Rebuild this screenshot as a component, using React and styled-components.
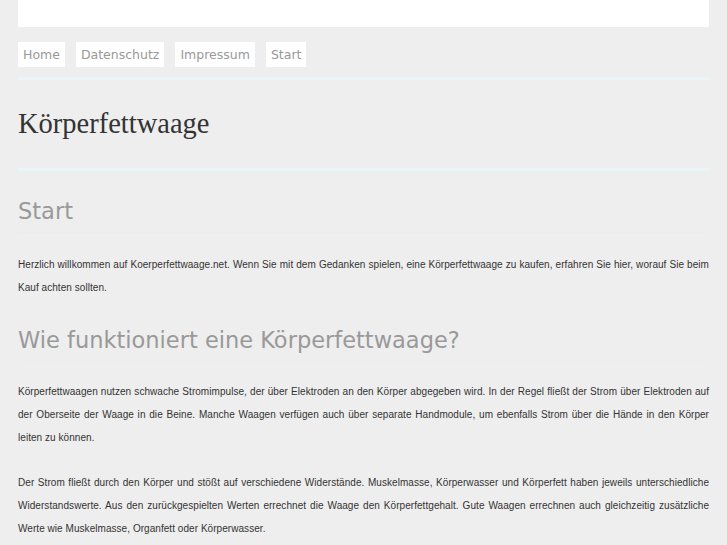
import React from 'react';
import styled, { createGlobalStyle } from 'styled-components';

const GlobalStyle = createGlobalStyle`
  body {
    margin: 0;
    background: #eeeeee;
    font-family: "Liberation Sans", Arial, sans-serif;
  }
`;

const Page = styled.div`
  margin: 0 18px;
`;

const Header = styled.header`
  height: 27px;
  background: #ffffff;
`;

const Nav = styled.nav`
  display: flex;
  gap: 11px;
  margin-top: 15px;
  padding-bottom: 10px;
  border-bottom: 3px solid #e9f4f6;
`;

const NavItem = styled.a`
  display: block;
  height: 25px;
  line-height: 25px;
  padding: 0 5px;
  background: #ffffff;
  color: #999999;
  font-family: "DejaVu Sans", sans-serif;
  font-size: 12.5px;
  text-decoration: none;
`;

const TitleBar = styled.div`
  height: 88px;
  display: flex;
  align-items: center;
  border-bottom: 3px solid #e9f4f6;
`;

const Title = styled.h1`
  margin: 0;
  font-family: "Liberation Serif", "Times New Roman", serif;
  font-weight: normal;
  font-size: 28.5px;
  color: #333333;
`;

const Heading = styled.h2`
  margin: ${p => p.$top}px 0 0;
  padding-bottom: 6px;
  border-bottom: 1px solid #e6eef0;
  font-family: "DejaVu Sans", sans-serif;
  font-weight: normal;
  font-size: 22.5px;
  line-height: 30px;
  color: #999999;
`;

const Para = styled.p`
  margin: ${p => p.$top}px 0 0;
  font-size: 10px;
  line-height: 23px;
  letter-spacing: 0.05px;
  text-align: justify;
  color: #333333;
`;

export default function App() {
  return (
    <Page>
      <GlobalStyle />
      <Header />
      <Nav>
        <NavItem href="#">Home</NavItem>
        <NavItem href="#">Datenschutz</NavItem>
        <NavItem href="#">Impressum</NavItem>
        <NavItem href="#">Start</NavItem>
      </Nav>
      <TitleBar>
        <Title>Körperfettwaage</Title>
      </TitleBar>
      <Heading $top={25}>Start</Heading>
      <Para $top={20}>
        Herzlich willkommen auf Koerperfettwaage.net. Wenn Sie mit dem Gedanken spielen, eine
        Körperfettwaage zu kaufen, erfahren Sie hier, worauf Sie beim Kauf achten sollten.
      </Para>
      <Heading $top={26}>Wie funktioniert eine Körperfettwaage?</Heading>
      <Para $top={18}>
        Körperfettwaagen nutzen schwache Stromimpulse, der über Elektroden an den Körper abgegeben
        wird. In der Regel fließt der Strom über Elektroden auf der Oberseite der Waage in die
        Beine. Manche Waagen verfügen auch über separate Handmodule, um ebenfalls Strom über die
        Hände in den Körper leiten zu können.
      </Para>
      <Para $top={22}>
        Der Strom fließt durch den Körper und stößt auf verschiedene Widerstände. Muskelmasse,
        Körperwasser und Körperfett haben jeweils unterschiedliche Widerstandswerte. Aus den
        zurückgespielten Werten errechnet die Waage den Körperfettgehalt. Gute Waagen errechnen
        auch gleichzeitig zusätzliche Werte wie Muskelmasse, Organfett oder Körperwasser.
      </Para>
    </Page>
  );
}
